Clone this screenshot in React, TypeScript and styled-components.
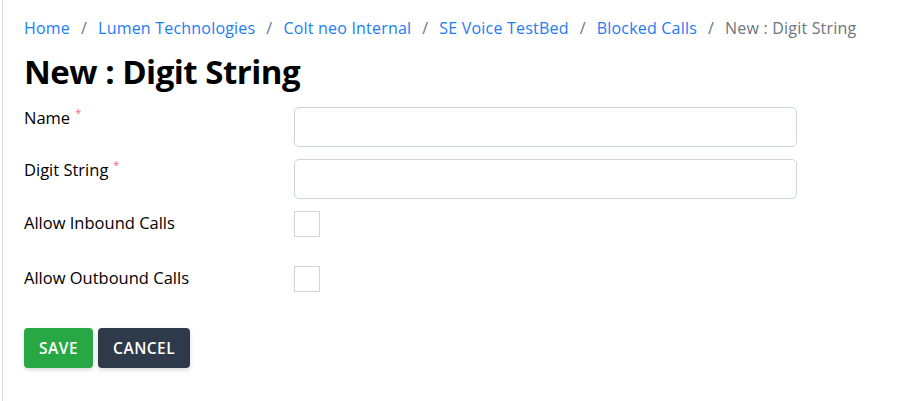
import React from 'react';
import styled, { createGlobalStyle } from 'styled-components';

const GlobalStyle = createGlobalStyle`
  html, body {
    margin: 0;
    padding: 0;
    background: #fff;
  }
  body {
    font-family: 'Open Sans', 'Liberation Sans', sans-serif;
    color: #000;
  }
`;

const Page = styled.div`
  margin-left: 2px;
  border-left: 1px solid #dcdcdc;
  min-height: 401px;
  box-sizing: border-box;
  padding: 16px 0 0 21px;
`;

const Breadcrumb = styled.nav`
  display: flex;
  align-items: center;
  font-size: 16px;
  letter-spacing: 0.2px;
  line-height: 24px;
  height: 24px;
`;

const Crumb = styled.a<{ active?: boolean }>`
  color: ${p => (p.active ? '#6c757d' : '#1c7cf3')};
  text-decoration: none;
  white-space: nowrap;
`;

const Sep = styled.span`
  color: #6c757d;
  padding: 0 11px;
`;

const Title = styled.h1`
  margin: 10px 0 0;
  font-size: 33px;
  font-weight: 700;
  line-height: 44px;
  letter-spacing: -0.5px;
`;

const Form = styled.form`
  margin-top: 13px;
  display: flex;
  flex-direction: column;
`;

const Row = styled.div<{ gapBelow: number }>`
  display: grid;
  grid-template-columns: 270px 503px;
  align-items: start;
  margin-bottom: ${p => p.gapBelow}px;
`;

const Label = styled.label<{ centered?: boolean }>`
  font-size: 16.5px;
  line-height: 22px;
  padding-top: ${p => (p.centered ? '1px' : '0')};
  color: #000;
`;

const Req = styled.sup`
  color: #f06a7c;
  font-size: 11px;
  margin-left: 5px;
  vertical-align: 7px;
  line-height: 0;
`;

const Input = styled.input`
  box-sizing: border-box;
  width: 503px;
  height: 40px;
  border: 1px solid #ced4da;
  border-radius: 5px;
  padding: 6px 12px;
  font: inherit;
  outline: none;
`;

const Check = styled.span`
  display: block;
  box-sizing: border-box;
  width: 26px;
  height: 26px;
  border: 1px solid #d4d4d4;
  background: #fff;
`;

const Actions = styled.div`
  display: flex;
  gap: 5px;
`;

const Button = styled.button<{ variant: 'save' | 'cancel' }>`
  height: 40px;
  padding: 0 15px;
  border: none;
  border-radius: 4px;
  font-family: 'Open Sans', 'Liberation Sans', sans-serif;
  font-size: 15.5px;
  font-weight: 600;
  letter-spacing: 0.5px;
  text-transform: uppercase;
  color: #fff;
  background: ${p => (p.variant === 'save' ? '#28a745' : '#2e3a4a')};
  box-shadow: 0 2px 4px rgba(0, 0, 0, 0.15);
  cursor: pointer;
`;

const crumbs = [
  'Home',
  'Lumen Technologies',
  'Colt neo Internal',
  'SE Voice TestBed',
  'Blocked Calls',
];

export default function App() {
  return (
    <>
      <GlobalStyle />
      <Page>
        <Breadcrumb>
          {crumbs.map(c => (
            <React.Fragment key={c}>
              <Crumb href="#">{c}</Crumb>
              <Sep>/</Sep>
            </React.Fragment>
          ))}
          <Crumb active>New : Digit String</Crumb>
        </Breadcrumb>
        <Title>New : Digit String</Title>
        <Form>
          <Row gapBelow={12}>
            <Label>
              Name<Req>*</Req>
            </Label>
            <Input />
          </Row>
          <Row gapBelow={12}>
            <Label>
              Digit String<Req>*</Req>
            </Label>
            <Input />
          </Row>
          <Row gapBelow={29}>
            <Label centered>Allow Inbound Calls</Label>
            <Check />
          </Row>
          <Row gapBelow={36}>
            <Label centered>Allow Outbound Calls</Label>
            <Check />
          </Row>
          <Actions>
            <Button type="button" variant="save">Save</Button>
            <Button type="button" variant="cancel">Cancel</Button>
          </Actions>
        </Form>
      </Page>
    </>
  );
}
